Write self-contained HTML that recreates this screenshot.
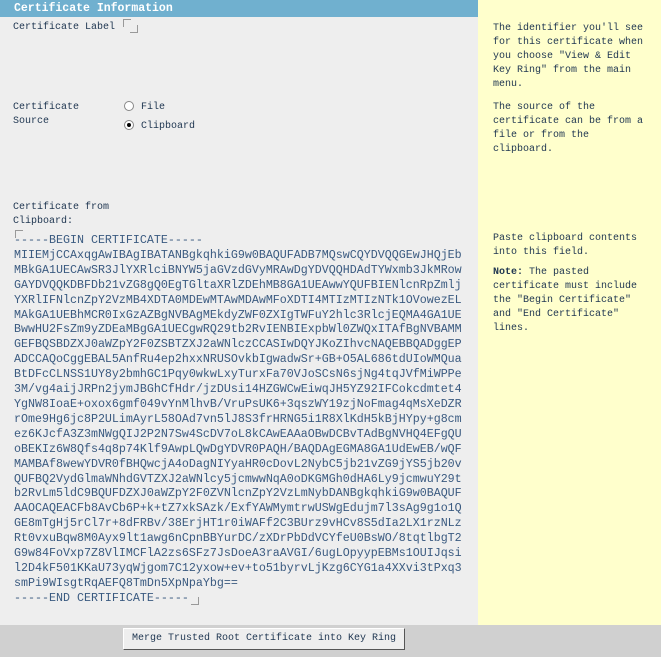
<html><head><style>
body{margin:0;width:661px;height:657px;background:#eeeeee;position:relative;overflow:hidden;font-family:"Liberation Mono",monospace;font-size:10px;color:#1e3550}
.a{position:absolute;white-space:pre;line-height:14px}
#hd{position:absolute;left:0;top:0;width:478px;height:17px;background:#70b0cf;color:#fff;font-weight:bold;font-size:11.5px;line-height:17px;padding-left:14px;box-sizing:border-box}
#rt{position:absolute;left:478px;top:0;width:183px;height:625px;background:#ffffcc}
#bt{position:absolute;left:0;top:625px;width:661px;height:32px;background:#d0d0d0}
#btn{position:absolute;left:123px;top:628px;width:282px;height:22px;background:#eeeeee;border:1px solid #fff;border-right-color:#555;border-bottom-color:#555;box-sizing:border-box;font-size:10px;line-height:20px;text-align:center;color:#1e3550}
#cert{position:absolute;left:14px;top:233px;font-size:11.67px;line-height:14.9px;white-space:pre;color:#3a5a80}
.r{position:absolute;width:10px;height:10px;border-radius:50%;background:#fff;border:1px solid #888;box-sizing:border-box}
.c{position:absolute;width:7px;height:7px;border-left:1px solid #999;border-top:1px solid #999}
.c2{position:absolute;width:7px;height:7px;border-right:1px solid #999;border-bottom:1px solid #999}
</style></head><body>
<div id="hd">Certificate Information</div>
<div id="rt"></div>
<div class="a" style="left:13px;top:21px">Certificate Label</div>
<div class="c" style="left:123px;top:19px"></div><div class="c2" style="left:130px;top:25px"></div>
<div class="a" style="left:13px;top:101px">Certificate
Source</div>
<div class="r" style="left:124px;top:101px"></div>
<div class="a" style="left:141px;top:101px">File</div>
<div class="r" style="left:124px;top:120px"><div style="position:absolute;left:2px;top:2px;width:4px;height:4px;border-radius:50%;background:#000"></div></div>
<div class="a" style="left:141px;top:120px">Clipboard</div>
<div class="a" style="left:13px;top:201px">Certificate from
Clipboard:</div>
<div class="c" style="left:15px;top:230px"></div>
<div id="cert">-----BEGIN CERTIFICATE-----
MIIEMjCCAxqgAwIBAgIBATANBgkqhkiG9w0BAQUFADB7MQswCQYDVQQGEwJHQjEb
MBkGA1UECAwSR3JlYXRlciBNYW5jaGVzdGVyMRAwDgYDVQQHDAdTYWxmb3JkMRow
GAYDVQQKDBFDb21vZG8gQ0EgTGltaXRlZDEhMB8GA1UEAwwYQUFBIENlcnRpZmlj
YXRlIFNlcnZpY2VzMB4XDTA0MDEwMTAwMDAwMFoXDTI4MTIzMTIzNTk1OVowezEL
MAkGA1UEBhMCR0IxGzAZBgNVBAgMEkdyZWF0ZXIgTWFuY2hlc3RlcjEQMA4GA1UE
BwwHU2FsZm9yZDEaMBgGA1UECgwRQ29tb2RvIENBIExpbWl0ZWQxITAfBgNVBAMM
GEFBQSBDZXJ0aWZpY2F0ZSBTZXJ2aWNlczCCASIwDQYJKoZIhvcNAQEBBQADggEP
ADCCAQoCggEBAL5AnfRu4ep2hxxNRUSOvkbIgwadwSr+GB+O5AL686tdUIoWMQua
BtDFcCLNSS1UY8y2bmhGC1Pqy0wkwLxyTurxFa70VJoSCsN6sjNg4tqJVfMiWPPe
3M/vg4aijJRPn2jymJBGhCfHdr/jzDUsi14HZGWCwEiwqJH5YZ92IFCokcdmtet4
YgNW8IoaE+oxox6gmf049vYnMlhvB/VruPsUK6+3qszWY19zjNoFmag4qMsXeDZR
rOme9Hg6jc8P2ULimAyrL58OAd7vn5lJ8S3frHRNG5i1R8XlKdH5kBjHYpy+g8cm
ez6KJcfA3Z3mNWgQIJ2P2N7Sw4ScDV7oL8kCAwEAAaOBwDCBvTAdBgNVHQ4EFgQU
oBEKIz6W8Qfs4q8p74Klf9AwpLQwDgYDVR0PAQH/BAQDAgEGMA8GA1UdEwEB/wQF
MAMBAf8wewYDVR0fBHQwcjA4oDagNIYyaHR0cDovL2NybC5jb21vZG9jYS5jb20v
QUFBQ2VydGlmaWNhdGVTZXJ2aWNlcy5jcmwwNqA0oDKGMGh0dHA6Ly9jcmwuY29t
b2RvLm5ldC9BQUFDZXJ0aWZpY2F0ZVNlcnZpY2VzLmNybDANBgkqhkiG9w0BAQUF
AAOCAQEACFb8AvCb6P+k+tZ7xkSAzk/ExfYAWMymtrwUSWgEdujm7l3sAg9g1o1Q
GE8mTgHj5rCl7r+8dFRBv/38ErjHT1r0iWAFf2C3BUrz9vHCv8S5dIa2LX1rzNLz
Rt0vxuBqw8M0Ayx9lt1awg6nCpnBBYurDC/zXDrPbDdVCYfeU0BsWO/8tqtlbgT2
G9w84FoVxp7Z8VlIMCFlA2zs6SFz7JsDoeA3raAVGI/6ugLOpyypEBMs1OUIJqsi
l2D4kF501KKaU73yqWjgom7C12yxow+ev+to51byrvLjKzg6CYG1a4XXvi3tPxq3
smPi9WIsgtRqAEFQ8TmDn5XpNpaYbg==
-----END CERTIFICATE-----</div>
<div class="c2" style="left:191px;top:597px"></div>
<div class="a" style="left:493px;top:22px">The identifier you'll see
for this certificate when
you choose "View &amp; Edit
Key Ring" from the main
menu.</div>
<div class="a" style="left:493px;top:101px">The source of the
certificate can be from a
file or from the
clipboard.</div>
<div class="a" style="left:493px;top:232px">Paste clipboard contents
into this field.</div>
<div class="a" style="left:493px;top:266px"><b>Note:</b> The pasted
certificate must include
the "Begin Certificate"
and "End Certificate"
lines.</div>
<div id="bt"></div>
<div id="btn">Merge Trusted Root Certificate into Key Ring</div>
</body></html>
